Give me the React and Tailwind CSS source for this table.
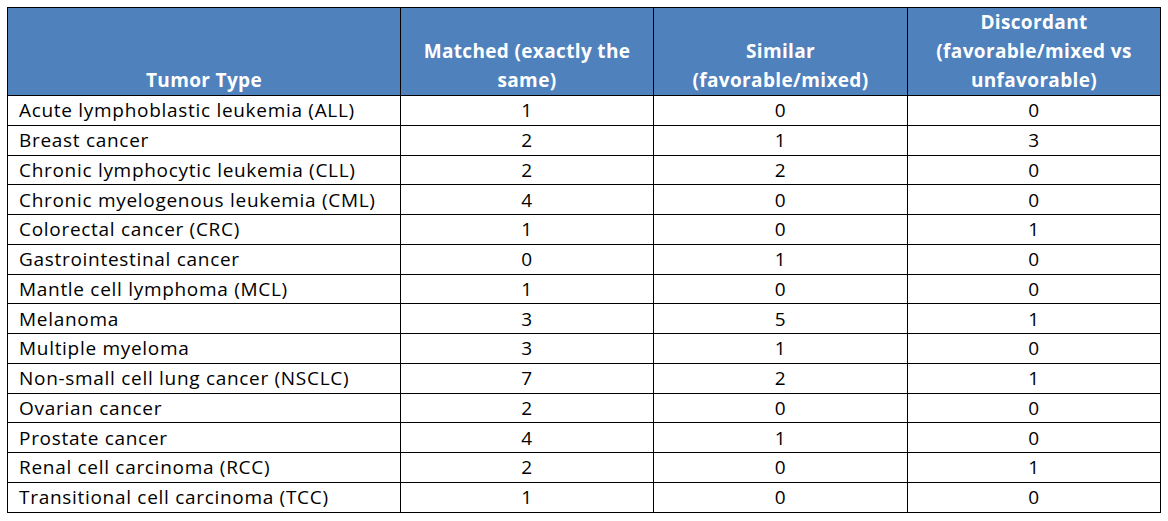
import React from "react";

const rows = [
  ["Acute lymphoblastic leukemia (ALL)", 1, 0, 0],
  ["Breast cancer", 2, 1, 3],
  ["Chronic lymphocytic leukemia (CLL)", 2, 2, 0],
  ["Chronic myelogenous leukemia (CML)", 4, 0, 0],
  ["Colorectal cancer (CRC)", 1, 0, 1],
  ["Gastrointestinal cancer", 0, 1, 0],
  ["Mantle cell lymphoma (MCL)", 1, 0, 0],
  ["Melanoma", 3, 5, 1],
  ["Multiple myeloma", 3, 1, 0],
  ["Non-small cell lung cancer (NSCLC)", 7, 2, 1],
  ["Ovarian cancer", 2, 0, 0],
  ["Prostate cancer", 4, 1, 0],
  ["Renal cell carcinoma (RCC)", 2, 0, 1],
  ["Transitional cell carcinoma (TCC)", 1, 0, 0],
];

export default function App() {
  return (
    <div className="bg-white w-[1168px] h-[521px] pt-[7px] pl-[7px]" style={{ fontFamily: "'Open Sans', sans-serif" }}>
      <table className="border-collapse table-fixed w-[1153px] text-[19px] text-black">
        <colgroup>
          <col className="w-[393px]" />
          <col className="w-[253px]" />
          <col className="w-[254px]" />
          <col className="w-[253px]" />
        </colgroup>
        <thead>
          <tr className="h-[87px] bg-[#4f81bd] text-white leading-[29px] tracking-[0.35px]">
            <th className="border border-black align-bottom text-center px-2 py-0 font-bold">Tumor Type</th>
            <th className="border border-black align-bottom text-center px-3 py-0 font-bold">Matched (exactly the same)</th>
            <th className="border border-black align-bottom text-center px-3 py-0 font-bold">Similar (favorable/mixed)</th>
            <th className="border border-black align-bottom text-center px-3 py-0 font-bold">Discordant (favorable/mixed vs unfavorable)</th>
          </tr>
        </thead>
        <tbody>
          {rows.map((r) => (
            <tr key={r[0]} className="h-[29.75px] leading-[26px] tracking-[0.7px]">
              <td className="border border-black pl-[11px] py-0">{r[0]}</td>
              <td className="border border-black text-center py-0">{r[1]}</td>
              <td className="border border-black text-center py-0">{r[2]}</td>
              <td className="border border-black text-center py-0">{r[3]}</td>
            </tr>
          ))}
        </tbody>
      </table>
    </div>
  );
}
